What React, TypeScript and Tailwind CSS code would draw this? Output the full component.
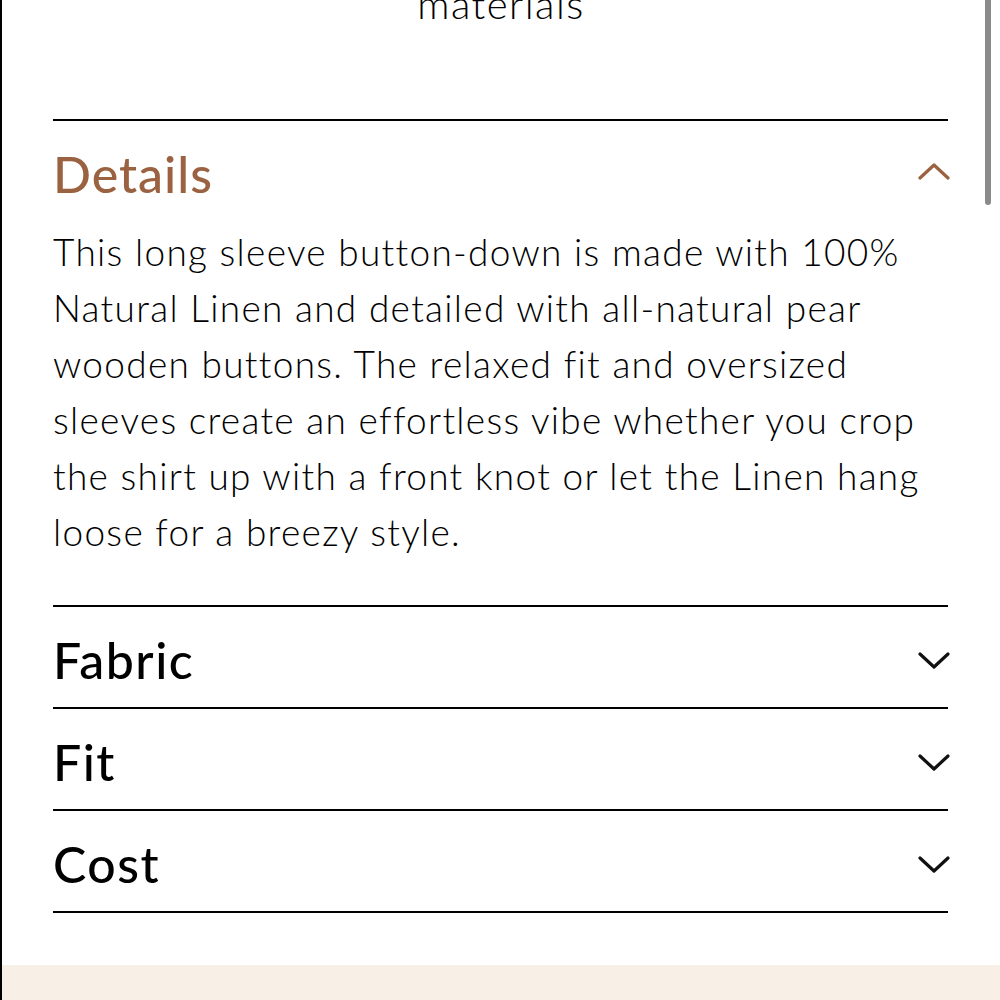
import React from 'react';

const BROWN = '#9a6240';

const bodyLines = [
  'This long sleeve button-down is made with 100%',
  'Natural Linen and detailed with all-natural pear',
  'wooden buttons. The relaxed fit and oversized',
  'sleeves create an effortless vibe whether you crop',
  'the shirt up with a front knot or let the Linen hang',
  'loose for a breezy style.',
];

function Chevron({ up, color }: { up?: boolean; color: string }) {
  return (
    <svg width="32" height="20" viewBox="0 0 32 20" fill="none">
      <polyline
        points={up ? '2,17 16,4 30,17' : '2,4 16,17 30,4'}
        stroke={color}
        strokeWidth="3.2"
        strokeLinecap="round"
        strokeLinejoin="round"
      />
    </svg>
  );
}

function Row({ title }: { title: string }) {
  return (
    <div className="flex h-[102px] items-center justify-between border-b-2 border-black pt-[6px]">
      <span className="text-[50px] font-medium leading-[56px] tracking-[1.5px] text-black">{title}</span>
      <span className="mr-[-2px]">
        <Chevron color="#111" />
      </span>
    </div>
  );
}

export default function App() {
  return (
    <div
      className="relative h-[1000px] w-full overflow-hidden border-l-2 border-black bg-white"
      style={{ fontFamily: 'Lato, "Noto Sans", sans-serif' }}
    >
      {/* scrollbar */}
      <div className="absolute right-[9px] top-[-10px] h-[215px] w-[6px] rounded-full bg-[#8a8a8a]" />

      <div className="flex h-[119px] justify-center">
        <p className="mt-[-16px] h-[40px] text-[40px] font-light leading-[40px] tracking-[1.5px] text-black">
          materials
        </p>
      </div>

      <div className="px-[51px] pr-[52px]">
        <div className="border-t-2 border-black">
          <div className="flex h-[103px] items-center justify-between pt-[2px]">
            <span className="text-[50px] font-medium leading-[56px] tracking-[1px]" style={{ color: BROWN }}>
              Details
            </span>
            <span className="mr-[-2px] mt-[-6px]">
              <Chevron up color={BROWN} />
            </span>
          </div>
          <div className="pb-[45px] text-[37px] font-light leading-[56px] tracking-[1.3px] text-black">
            {bodyLines.map((l) => (
              <div key={l} className="whitespace-nowrap">
                {l}
              </div>
            ))}
          </div>
        </div>

        <div className="border-t-2 border-black">
          <Row title="Fabric" />
          <Row title="Fit" />
          <Row title="Cost" />
        </div>
      </div>

      <div className="absolute bottom-0 left-0 right-0 h-[35px] bg-[#f8f0e6]" />
    </div>
  );
}
